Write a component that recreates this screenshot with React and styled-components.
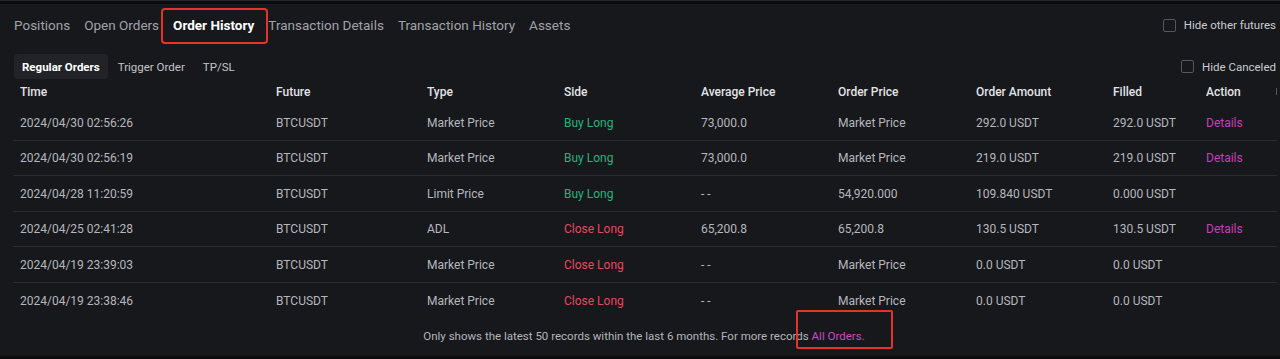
import React from "react";
import styled, { createGlobalStyle } from "styled-components";

const GlobalStyle = createGlobalStyle`
  html, body {
    margin: 0;
    padding: 0;
    background: #0b0b0d;
    overflow: hidden;
  }
  * {
    box-sizing: border-box;
  }
`;

const tabs = [
  "Positions",
  "Open Orders",
  "Order History",
  "Transaction Details",
  "Transaction History",
  "Assets",
];

const subTabs = ["Regular Orders", "Trigger Order", "TP/SL"];

const columns = [
  "Time",
  "Future",
  "Type",
  "Side",
  "Average Price",
  "Order Price",
  "Order Amount",
  "Filled",
  "Action",
];

const orders = [
  ["2024/04/30 02:56:26", "BTCUSDT", "Market Price", "buy", "73,000.0", "Market Price", "292.0 USDT", "292.0 USDT", true],
  ["2024/04/30 02:56:19", "BTCUSDT", "Market Price", "buy", "73,000.0", "Market Price", "219.0 USDT", "219.0 USDT", true],
  ["2024/04/28 11:20:59", "BTCUSDT", "Limit Price", "buy", "- -", "54,920.000", "109.840 USDT", "0.000 USDT", false],
  ["2024/04/25 02:41:28", "BTCUSDT", "ADL", "close", "65,200.8", "65,200.8", "130.5 USDT", "130.5 USDT", true],
  ["2024/04/19 23:39:03", "BTCUSDT", "Market Price", "close", "- -", "Market Price", "0.0 USDT", "0.0 USDT", false],
  ["2024/04/19 23:38:46", "BTCUSDT", "Market Price", "close", "- -", "Market Price", "0.0 USDT", "0.0 USDT", false],
];

function App() {
  return (
    <>
      <GlobalStyle />
      <Page>
        <Panel>
          <TabBar>
            <Tabs>
              {tabs.map((t) => (
                <Tab key={t} $active={t === "Order History"}>
                  {t}
                </Tab>
              ))}
            </Tabs>
            <CheckRow>
              <Box />
              <CheckLabel>Hide other futures</CheckLabel>
            </CheckRow>
          </TabBar>

          <SubBar>
            <SubTabs>
              {subTabs.map((t) => (
                <SubTab key={t} $active={t === "Regular Orders"}>
                  {t}
                </SubTab>
              ))}
            </SubTabs>
            <CheckRow>
              <Box />
              <CheckLabel>Hide Canceled</CheckLabel>
            </CheckRow>
          </SubBar>

          <Table>
            <HeadRow>
              {columns.map((c) => (
                <HeadCell key={c}>{c}</HeadCell>
              ))}
              <ResizeMark />
            </HeadRow>
            {orders.map((o, i) => (
              <Row key={i} $last={i === orders.length - 1}>
                <Cell>{o[0]}</Cell>
                <Cell>{o[1]}</Cell>
                <Cell>{o[2]}</Cell>
                <SideCell $side={o[3]}>
                  {o[3] === "buy" ? "Buy Long" : "Close Long"}
                </SideCell>
                <Cell>{o[4]}</Cell>
                <Cell>{o[5]}</Cell>
                <Cell>{o[6]}</Cell>
                <Cell>{o[7]}</Cell>
                <Cell>{o[8] && <LinkText>Details</LinkText>}</Cell>
              </Row>
            ))}
          </Table>

          <Footer>
            Only shows the latest 50 records within the last 6 months. For more
            records&nbsp;<FooterLink>All Orders.</FooterLink>
          </Footer>
        </Panel>
      </Page>
    </>
  );
}

const Page = styled.div`
  width: 1280px;
  height: 359px;
  padding-top: 4px;
  background: linear-gradient(#26272c 0 1px, #0b0b0d 1px);
  font-family: Roboto, "Liberation Sans", sans-serif;
`;

const Panel = styled.div`
  height: 352px;
  background: #17181c;
  display: flex;
  flex-direction: column;
`;

const TabBar = styled.div`
  height: 42px;
  display: flex;
  align-items: center;
  justify-content: space-between;
  padding: 0 4px 0 14px;
`;

const Tabs = styled.div`
  display: flex;
  align-items: center;
  gap: 14px;
`;

const Tab = styled.div`
  position: relative;
  font-size: 13.5px;
  line-height: 16px;
  color: ${(p) => (p.$active ? "#ffffff" : "#a0a2a9")};
  font-weight: ${(p) => (p.$active ? 700 : 400)};

  ${(p) =>
    p.$active &&
    `
    &::after {
      content: "";
      position: absolute;
      left: -12px;
      right: -14px;
      top: -9px;
      bottom: -11px;
      border: 2px solid #e5332c;
      border-radius: 4px;
    }
  `}
`;

const CheckRow = styled.label`
  display: flex;
  align-items: center;
  gap: 8px;
  white-space: nowrap;
`;

const Box = styled.span`
  width: 13px;
  height: 13px;
  border: 1px solid #55575e;
  border-radius: 2px;
`;

const CheckLabel = styled.span`
  font-size: 11.5px;
  color: #c9cbd0;
`;

const SubBar = styled.div`
  margin-top: 8px;
  height: 25px;
  display: flex;
  align-items: center;
  justify-content: space-between;
  padding: 0 4px 0 14px;
`;

const SubTabs = styled.div`
  display: flex;
  gap: 2px;
`;

const SubTab = styled.div`
  height: 25px;
  display: flex;
  align-items: center;
  padding: 0 8px;
  border-radius: 3px;
  font-size: 11.5px;
  background: ${(p) => (p.$active ? "#222329" : "transparent")};
  color: ${(p) => (p.$active ? "#ffffff" : "#c2c4c9")};
  font-weight: ${(p) => (p.$active ? 700 : 400)};
`;

const Table = styled.div`
  margin: 0 3px 0 13px;
`;

const grid = `
  display: grid;
  grid-template-columns: 256px 151px 137px 137px 137px 138px 137px 93px 1fr;
  align-items: center;
`;

const HeadRow = styled.div`
  ${grid}
  position: relative;
  height: 26px;
  padding-bottom: 1px;
`;

const HeadCell = styled.div`
  padding-left: 7px;
  font-size: 12px;
  font-weight: 500;
  color: #e2e3e6;
`;

const ResizeMark = styled.span`
  position: absolute;
  right: 0;
  top: 9px;
  width: 1px;
  height: 7px;
  background: #55575e;
`;

const Row = styled.div`
  ${grid}
  height: 35.5px;
  padding-top: 1px;
  border-bottom: ${(p) => (p.$last ? "none" : "1px solid #2a2b30")};
`;

const Cell = styled.div`
  padding-left: 7px;
  font-size: 12px;
  color: #b5b7bc;
  white-space: nowrap;
`;

const SideCell = styled(Cell)`
  color: ${(p) => (p.$side === "buy" ? "#28b27a" : "#e24a5c")};
`;

const LinkText = styled.span`
  color: #c43fb8;
`;

const Footer = styled.div`
  height: 35px;
  display: flex;
  align-items: center;
  justify-content: center;
  padding-left: 8px;
  font-size: 11.5px;
  color: #b3b5ba;
`;

const FooterLink = styled.span`
  position: relative;
  color: #c94bc0;

  &::after {
    content: "";
    position: absolute;
    left: -16px;
    right: -28px;
    top: -19px;
    bottom: -6px;
    border: 2px solid #e5332c;
    border-radius: 2px;
  }
`;

export default App;
